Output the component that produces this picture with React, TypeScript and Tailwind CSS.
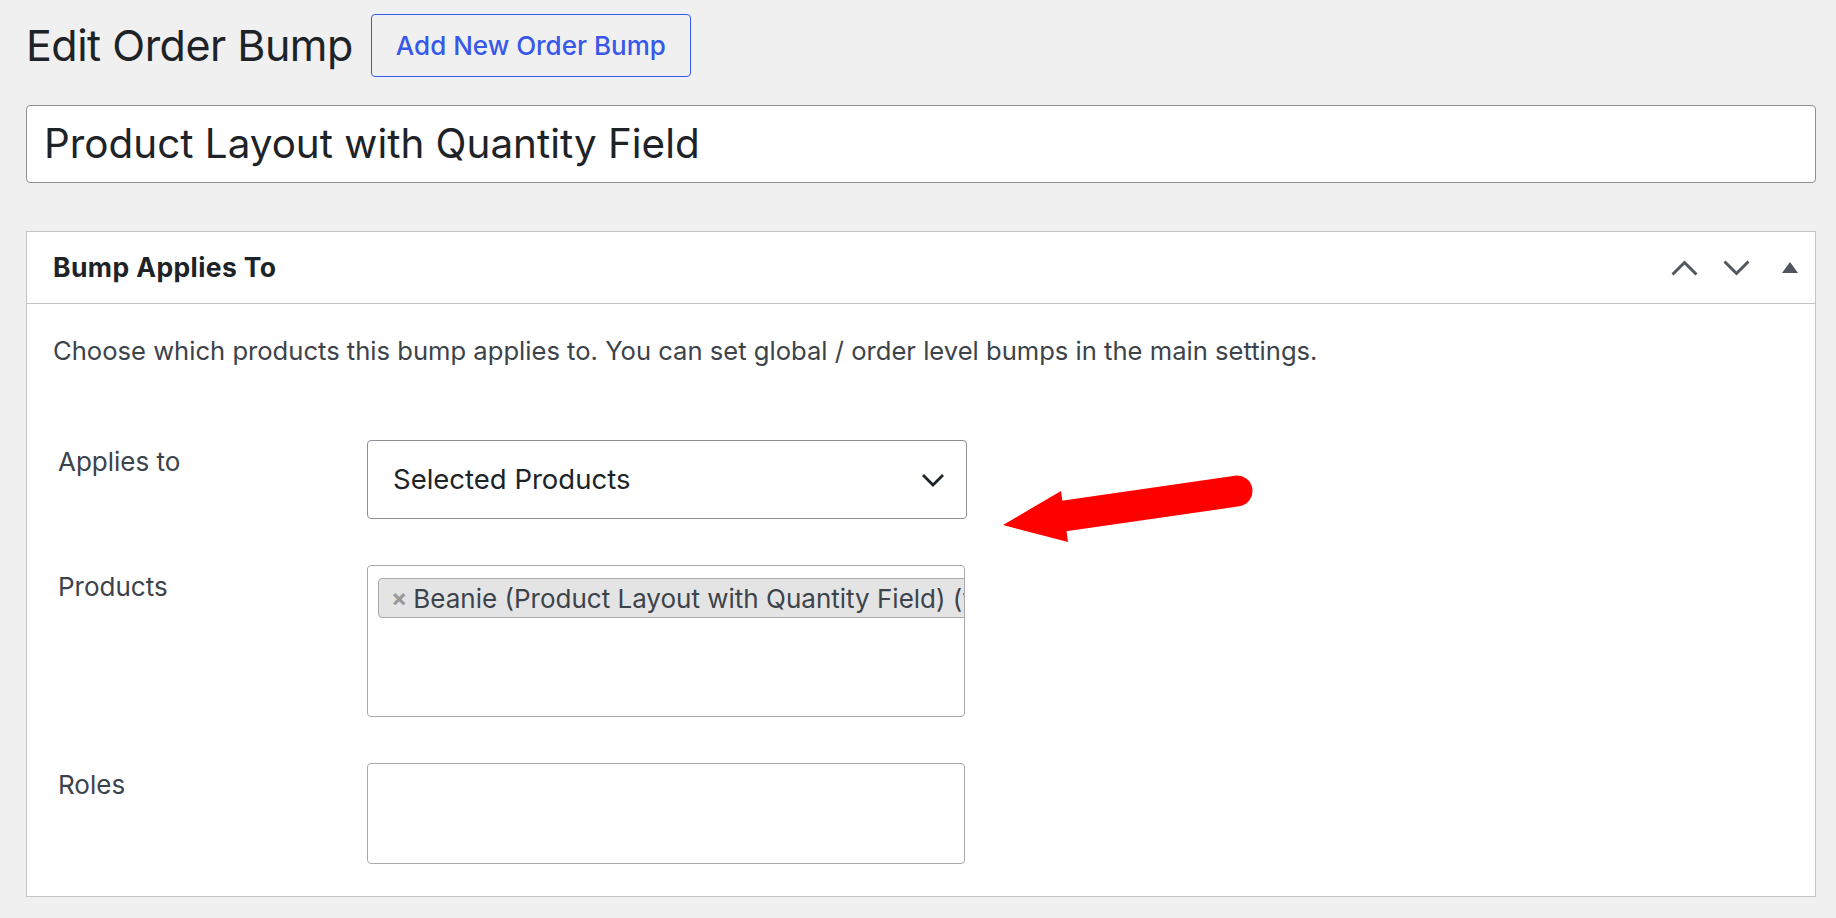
import React from 'react';

const font = { fontFamily: 'Inter, "Noto Sans", sans-serif' };

const Field = ({ label, children }: { label: string; children: React.ReactNode }) => (
  <div className="flex items-start">
    <div className="w-[340px] shrink-0 pl-[31px] pt-[7px] text-[26px] leading-[30px] text-[#3c434a]">{label}</div>
    {children}
  </div>
);

export default function App() {
  return (
    <div className="relative min-h-screen bg-[#f0f0f1] pl-[26px] pr-[20px] pt-[14px]" style={font}>
      <div className="flex items-center gap-[18px]">
        <h1 className="text-[43px] leading-[63px] font-normal text-[#1d2327] tracking-[-0.5px]">Edit Order Bump</h1>
        <button className="h-[63px] w-[320px] rounded-[4px] border-[1.5px] border-[#3858e9] text-[26px] font-medium text-[#3858e9]">
          Add New Order Bump
        </button>
      </div>

      <div className="mt-[28px] flex h-[78px] items-center rounded-[4px] border border-[#8c8f94] bg-white pl-[17px]">
        <span className="text-[40.4px] text-[#1d2327]">Product Layout with Quantity Field</span>
      </div>

      <div className="mt-[48px] border border-[#c3c4c7] bg-white">
        <div className="flex h-[72px] items-center border-b border-[#c3c4c7] pl-[26px] pr-[17px]">
          <h2 className="flex-1 text-[26.5px] font-bold tracking-[0.4px] text-[#1d2327]">Bump Applies To</h2>
          <svg width="27" height="16" viewBox="0 0 27 16" className="text-[#50575e]">
            <polyline points="1.5,14.5 13.5,2.5 25.5,14.5" fill="none" stroke="currentColor" strokeWidth="3" />
          </svg>
          <svg width="27" height="16" viewBox="0 0 27 16" className="ml-[25px] text-[#50575e]">
            <polyline points="1.5,1.5 13.5,13.5 25.5,1.5" fill="none" stroke="currentColor" strokeWidth="3" />
          </svg>
          <svg width="16" height="12" viewBox="0 0 16 12" className="ml-[32px] text-[#50575e]">
            <polygon points="0,11 8,0 16,11" fill="currentColor" />
          </svg>
        </div>

        <div className="pb-[32px] pt-[32px]">
          <p className="pl-[26px] text-[25.6px] leading-[30px] text-[#3c434a]">
            Choose which products this bump applies to. You can set global / order level bumps in the main settings.
          </p>

          <div className="mt-[74px] flex flex-col gap-[46px]">
            <Field label="Applies to">
              <div className="flex h-[79px] w-[600px] items-center justify-between rounded-[4px] border border-[#8c8f94] bg-white pl-[25px] pr-[21px]">
                <span className="text-[27.5px] text-[#1d2327]">Selected Products</span>
                <svg width="24" height="14" viewBox="0 0 24 14">
                  <polyline points="2,2 12,12 22,2" fill="none" stroke="#1d2327" strokeWidth="2.8" />
                </svg>
              </div>
            </Field>

            <Field label="Products">
              <div className="h-[152px] w-[598px] overflow-hidden rounded-[4px] border border-[#aaaaaa] bg-white pl-[10px] pt-[12px]">
                <div className="flex h-[40px] w-[620px] items-center overflow-hidden whitespace-nowrap rounded-[4px] border border-[#aaaaaa] bg-[#e4e4e4] pl-[12px]">
                  <span className="mr-[6px] text-[24px] font-bold text-[#999999]">×</span>
                  <span className="text-[26px] text-[#3c434a]">Beanie (Product Layout with Quantity Field) (woo-beanie)</span>
                </div>
              </div>
            </Field>

            <Field label="Roles">
              <div className="h-[101px] w-[598px] rounded-[4px] border border-[#aaaaaa] bg-white" />
            </Field>
          </div>
        </div>
      </div>

      <svg className="pointer-events-none absolute left-[990px] top-[460px]" width="270" height="100" viewBox="990 460 270 100">
        <line x1="1064" y1="516" x2="1237" y2="491" stroke="#ff0000" strokeWidth="31" strokeLinecap="round" />
        <polygon points="1003,525 1061,491 1068,542" fill="#ff0000" />
      </svg>
    </div>
  );
}
